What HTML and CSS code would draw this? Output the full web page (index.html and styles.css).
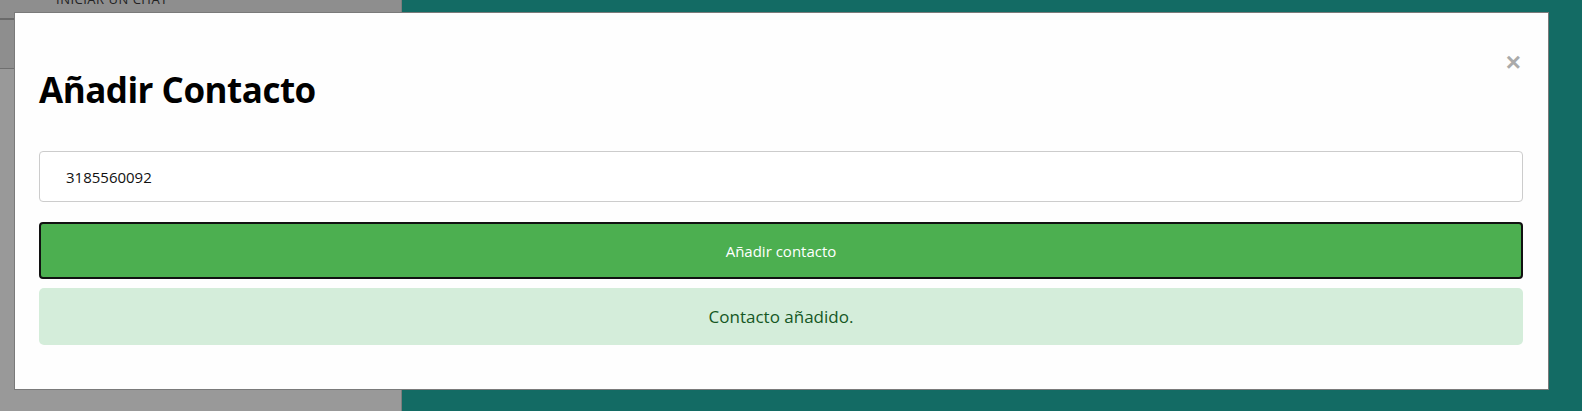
FILE: index.html
```html
<!DOCTYPE html>
<html lang="es">
<head>
<meta charset="utf-8">
<title>Añadir Contacto</title>
<link rel="stylesheet" href="styles.css">
</head>
<body>
<div class="page">
  <aside class="sidebar">
    <div class="sidebar-head">
      <span class="start-chat">INICIAR UN CHAT</span>
    </div>
    <div class="sidebar-row"></div>
    <div class="sidebar-rest"></div>
  </aside>
  <main class="chat-area"></main>
</div>

<div class="modal">
  <button class="close" type="button">×</button>
  <h1 class="modal-title">Añadir Contacto</h1>
  <form class="modal-form">
    <input class="field" type="text" value="3185560092">
    <button class="btn-add" type="button">Añadir contacto</button>
    <div class="alert">Contacto añadido.</div>
  </form>
</div>
</body>
</html>
```

FILE: styles.css
```css
* { box-sizing: border-box; }
html, body { margin: 0; padding: 0; height: 100%; }
body {
  font-family: "Open Sans", "Liberation Sans", sans-serif;
  overflow: hidden;
  position: relative;
}
.page {
  display: flex;
  height: 411px;
}
.sidebar {
  width: 402px;
  background: #999999;
  border-right: 1px solid #7d7d7d;
  display: flex;
  flex-direction: column;
}
.sidebar-head {
  height: 20px;
  border-bottom: 2px solid #6a6a6a;
  background: #8e8e8e;
  position: relative;
  overflow: hidden;
}
.start-chat {
  position: absolute;
  left: 56px;
  top: -10px;
  font-size: 13px;
  color: #222;
  letter-spacing: 0.5px;
}
.sidebar-row {
  height: 49px;
  background: #8e8e8e;
  border-bottom: 1px solid #6f6f6f;
}
.sidebar-rest { flex: 1; }
.chat-area {
  flex: 1;
  background: #136b64;
}
.modal {
  position: absolute;
  left: 14px;
  top: 12px;
  width: 1535px;
  height: 378px;
  background: #fefefe;
  border: 1px solid #7a7a7a;
  padding: 0 25px 0 24px;
}
.close {
  position: absolute;
  right: 27px;
  top: 36px;
  border: 0;
  background: none;
  color: #aaaaaa;
  font-size: 26px;
  font-weight: bold;
  line-height: 1;
  padding: 0;
  font-family: "Liberation Sans", sans-serif;
}
.modal-title {
  margin: 0;
  padding-top: 53px;
  font-size: 35px;
  font-weight: 700;
  line-height: 48px;
  color: #000;
  letter-spacing: -0.5px;
}
.modal-form {
  display: flex;
  flex-direction: column;
  margin-top: 37px;
}
.field {
  height: 51px;
  border: 1px solid #cccccc;
  border-radius: 4px;
  padding: 0 26px;
  font-family: "Open Sans", sans-serif;
  font-size: 15px;
  color: #111;
  background: #fff;
}
.btn-add {
  margin-top: 20px;
  height: 57px;
  background: #4caf50;
  border: 2px solid #111;
  border-radius: 4px;
  color: #fff;
  font-family: "Open Sans", sans-serif;
  font-size: 15px;
}
.alert {
  margin-top: 9px;
  height: 57px;
  background: #d4edda;
  color: #155724;
  border-radius: 5px;
  display: flex;
  align-items: center;
  justify-content: center;
  font-size: 17px;
}
```
